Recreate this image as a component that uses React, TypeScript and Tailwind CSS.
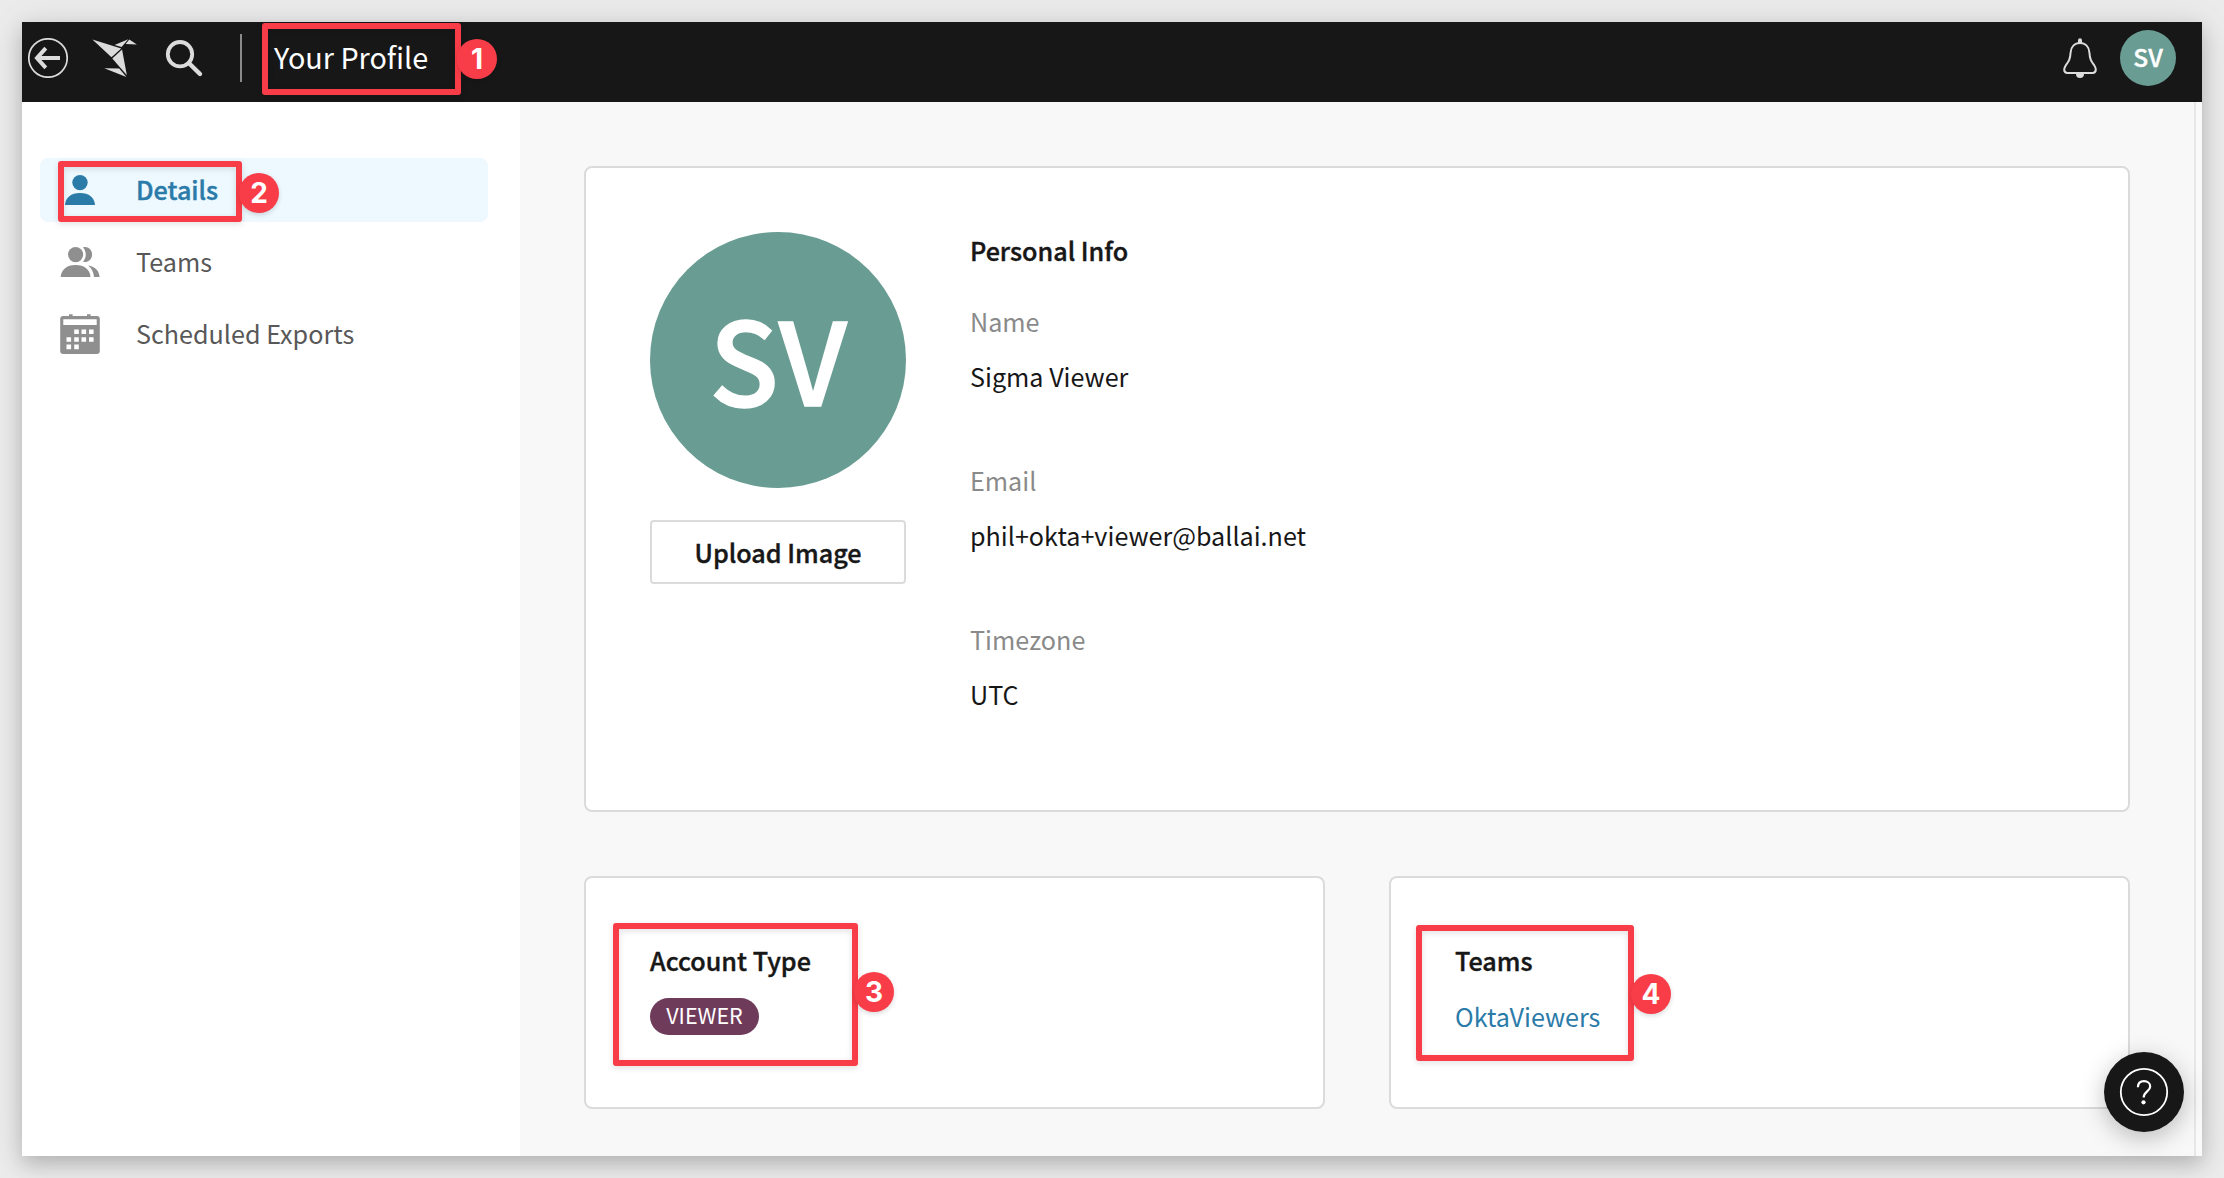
import type { ReactNode } from "react";

function BackIcon() {
  return (
    <svg className="h-10 w-10" viewBox="0 0 40 40" fill="none" stroke="#dcdcdc">
      <circle cx="20" cy="20" r="19.2" strokeWidth="1.7" />
      <path d="M32 20H10M17.8 10.2L9 20l8.8 9.8" strokeWidth="4" />
    </svg>
  );
}

function BirdIcon() {
  return (
    <svg className="h-10 w-12" viewBox="0 0 48 40" fill="#dcdcdc">
      <path d="M2.4 1.4L31.2 10.4L21.5 19.3Z" />
      <path d="M24.6 7L38.2 1.2L31.6 8.9Z" />
      <path d="M39.3 1.5L46.8 6.4L35.6 6Z" />
      <path d="M32 11.4L36.9 37.2L22.3 20.4Z" />
      <path d="M14.3 30.3L29.2 30.4L36.4 38.9Z" />
    </svg>
  );
}

function SearchIcon() {
  return (
    <svg className="h-10 w-10" viewBox="0 0 40 40" fill="none" stroke="#dcdcdc">
      <circle cx="16" cy="16.2" r="12.2" strokeWidth="3.8" />
      <path d="M24.8 25L36 36" strokeWidth="4.4" strokeLinecap="round" />
    </svg>
  );
}

function BellIcon() {
  return (
    <svg className="h-[42px] w-9" viewBox="0 0 36 42" fill="none">
      <path
        d="M18 6C12.500 6 9 10 8.600 15.500C8.200 22.500 6.500 24.500 3.800 28.300C2.500 30.200 2.200 31.200 2.200 32.600C2.200 34.800 3.400 36 5.400 36H30.600C32.600 36 33.800 34.800 33.800 32.600C33.800 31.200 33.500 30.200 32.200 28.300C29.500 24.500 27.800 22.500 27.400 15.500C27 10 23.500 6 18 6Z"
        stroke="#dcdcdc"
        strokeWidth="2"
      />
      <path d="M16 6.500V3.200a2 2 0 0 1 4 0V6.500ZM14 36h8v1a4 4 0 0 1-8 0Z" fill="#dcdcdc" />
    </svg>
  );
}

function PersonIcon() {
  return (
    <svg className="h-10 w-10" viewBox="0 0 40 40" fill="currentColor">
      <circle cx="20" cy="12.600" r="7.700" />
      <path d="M5 35C5.500 27.500 11 23 20 23S34.500 27.500 35 35Z" />
    </svg>
  );
}

function PeopleIcon() {
  return (
    <svg className="h-10 w-10" viewBox="0 0 40 40" fill="currentColor">
      <circle cx="15.600" cy="12.600" r="7.600" />
      <path d="M0.700 35C1.200 27.500 6.800 23 15.600 23S30 27.500 30.500 35Z" />
      <path d="M23 5.300C28 4 32.100 7.700 32.100 12.500S28 21 23 19.900C26.700 15.500 26.700 9.700 23 5.300Z" />
      <path d="M28 23.400C35.500 24.600 39.200 29 39.600 35H34C33.600 30 31.800 26.300 28 23.400Z" />
    </svg>
  );
}

function CalendarIcon() {
  return (
    <svg className="h-10 w-10" viewBox="0 0 40 40" fill="none">
      <rect x="0.200" y="2" width="39.600" height="38" rx="3" fill="currentColor" />
      <path d="M9 0.300h3.600V3H9ZM27 0.300h3.600V3H27Z" fill="currentColor" />
      <path
        d="M3.300 5.200H36.700V11H3.300ZM14.200 15.500h4.600v4.600h-4.600ZM21.500 15.500h4.600v4.600h-4.600ZM29 15.500h4.600v4.600H29ZM6.500 23.200h4.600v4.600H6.500ZM14.200 23.200h4.600v4.600h-4.600ZM21.500 23.200h4.600v4.600h-4.600ZM29 23.200h4.600v4.600H29ZM6.500 30.600h4.600v4.600H6.500ZM14.200 30.600h4.600v4.600h-4.600Z"
        fill="#fff"
      />
    </svg>
  );
}

function HelpIcon() {
  return (
    <svg className="h-[50px] w-[50px]" viewBox="0 0 50 50" fill="none" stroke="#fff">
      <circle cx="25" cy="25" r="23.200" strokeWidth="1.800" />
      <path d="M18.900 20.200C19 16.200 21.500 14.200 25 14.200C28.800 14.200 31.200 16.500 31.200 19.500C31.200 24.500 24.700 24.500 24.700 30.500" strokeWidth="2.200" />
      <circle cx="24.500" cy="35.300" r="2.100" fill="#fff" stroke="none" />
    </svg>
  );
}

function NavItem({ icon, label, active }: { icon: ReactNode; label: string; active?: boolean }) {
  return (
    <a
      className={
        active
          ? "flex h-16 items-center rounded-lg bg-[#edf8ff] pl-5 font-medium text-[#2b7ba9]"
          : "flex h-16 items-center rounded-lg pl-5 text-[#8f8f8f]"
      }
    >
      {icon}
      <span
        className={
          active ? "-mt-[3px] ml-9 [-webkit-text-stroke:0.4px_currentColor]" : "-mt-[3px] ml-9 text-[#585858]"
        }
      >
        {label}
      </span>
    </a>
  );
}

function Heading({ children }: { children: ReactNode }) {
  return <h2 className="font-medium [-webkit-text-stroke:0.4px_currentColor]">{children}</h2>;
}

function Field({ label, value }: { label: string; value: string }) {
  return (
    <div className="flex flex-col gap-[19px]">
      <dt className="text-[#8a8a8a]">{label}</dt>
      <dd>{value}</dd>
    </div>
  );
}

function Frame({ place }: { place: string }) {
  return (
    <div
      className={`pointer-events-none absolute rounded-[3px] border-[6px] border-[#f93d48] drop-shadow-[0_2px_3px_rgba(0,0,0,0.12)] ${place}`}
    />
  );
}

function Step({ n, place }: { n: number; place: string }) {
  return (
    <div
      className={`absolute flex h-10 w-10 items-center justify-center rounded-full bg-[#f93d48] font-[Inter,sans-serif] text-[28px] leading-none font-bold text-white shadow-[0_2px_5px_rgba(0,0,0,0.15)] ${place}`}
    >
      {n}
    </div>
  );
}

export default function App() {
  return (
    <div className="relative h-[1178px] w-[2224px] overflow-hidden bg-[#ebebeb] p-[22px] font-['Noto_Sans_CJK_SC','Noto_Sans',sans-serif] text-[25.15px] leading-9 text-[#171717]">
      <div className="flex h-[1134px] flex-col bg-white shadow-[0_8px_20px_rgba(0,0,0,0.22),0_0_40px_rgba(0,0,0,0.06)]">
        <header className="flex h-20 shrink-0 items-center bg-[#171717] pr-[26px] pb-2 pl-1.5 text-white">
          <BackIcon />
          <div className="ml-[22px]">
            <BirdIcon />
          </div>
          <div className="ml-[26px]">
            <SearchIcon />
          </div>
          <div className="ml-9 h-12 w-0.5 bg-[#8a8a8a]" />
          <h1 className="-mt-[3px] ml-8 text-[28.75px]">Your Profile</h1>
          <div className="ml-auto">
            <BellIcon />
          </div>
          <div className="ml-[22px] flex h-14 w-14 items-center justify-center rounded-full bg-[#699c92] text-[24.5px] font-medium">
            <span className="-mt-[3px] [-webkit-text-stroke:0.4px_currentColor]">SV</span>
          </div>
        </header>
        <div className="flex min-h-0 flex-1">
          <nav className="flex w-[498px] shrink-0 flex-col gap-2 pt-14 pr-8 pl-[18px]">
            <NavItem icon={<PersonIcon />} label="Details" active />
            <NavItem icon={<PeopleIcon />} label="Teams" />
            <NavItem icon={<CalendarIcon />} label="Scheduled Exports" />
          </nav>
          <main className="flex w-[1676px] shrink-0 flex-col gap-16 border-r-2 border-[#e7e7e7] bg-[#f8f8f8] px-16 pt-16">
            <section className="flex h-[646px] w-[1546px] shrink-0 gap-16 rounded-lg border-2 border-[#dbdbdb] bg-white p-16">
              <div className="flex w-64 flex-col gap-8">
                <div className="flex h-64 w-64 items-center justify-center rounded-full bg-[#699c92] text-[114.500px] leading-none font-medium text-white">
                  <span className="-mt-[7px] [-webkit-text-stroke:1.5px_currentColor]">SV</span>
                </div>
                <button className="flex h-16 w-64 items-center justify-center rounded-[4px] border-2 border-[#dbdbdb] font-medium">
                  <span className="-mt-px [-webkit-text-stroke:0.4px_currentColor]">Upload Image</span>
                </button>
              </div>
              <div className="flex flex-col gap-[35px]">
                <Heading>Personal Info</Heading>
                <dl className="flex flex-col gap-[68px]">
                  <Field label="Name" value="Sigma Viewer" />
                  <Field label="Email" value="phil+okta+viewer@ballai.net" />
                  <Field label="Timezone" value="UTC" />
                </dl>
              </div>
            </section>
            <div className="grid h-[233px] w-[1546px] grid-cols-2 gap-16">
              <section className="flex flex-col items-start gap-5 rounded-lg border-2 border-[#dbdbdb] bg-white px-16 pt-16">
                <Heading>Account Type</Heading>
                <span className="flex h-[37px] w-[109px] items-center justify-center rounded-full bg-[#6f3b5b] text-[21.5px] text-white">
                  <span className="-mt-[3px]">VIEWER</span>
                </span>
              </section>
              <section className="flex flex-col items-start gap-5 rounded-lg border-2 border-[#dbdbdb] bg-white px-16 pt-16">
                <Heading>Teams</Heading>
                <a className="text-[#2b7ba9]">OktaViewers</a>
              </section>
            </div>
          </main>
          <div className="flex-1 bg-[#fafafa]" />
        </div>
      </div>

      <button className="absolute top-[1052px] left-[2104px] flex h-20 w-20 items-center justify-center rounded-full bg-[#171717] shadow-[0_6px_24px_rgba(0,0,0,0.25)]">
        <HelpIcon />
      </button>

      <Frame place="top-[23px] left-[262px] h-[72px] w-[199px]" />
      <Step n={1} place="top-[39px] left-[457px]" />
      <Frame place="top-[161px] left-[58px] h-[61px] w-[184px]" />
      <Step n={2} place="top-[173px] left-[239px]" />
      <Frame place="top-[923px] left-[613px] h-[143px] w-[245px]" />
      <Step n={3} place="top-[972px] left-[854px]" />
      <Frame place="top-[925px] left-[1416px] h-[136px] w-[218px]" />
      <Step n={4} place="top-[974px] left-[1631px]" />
    </div>
  );
}
